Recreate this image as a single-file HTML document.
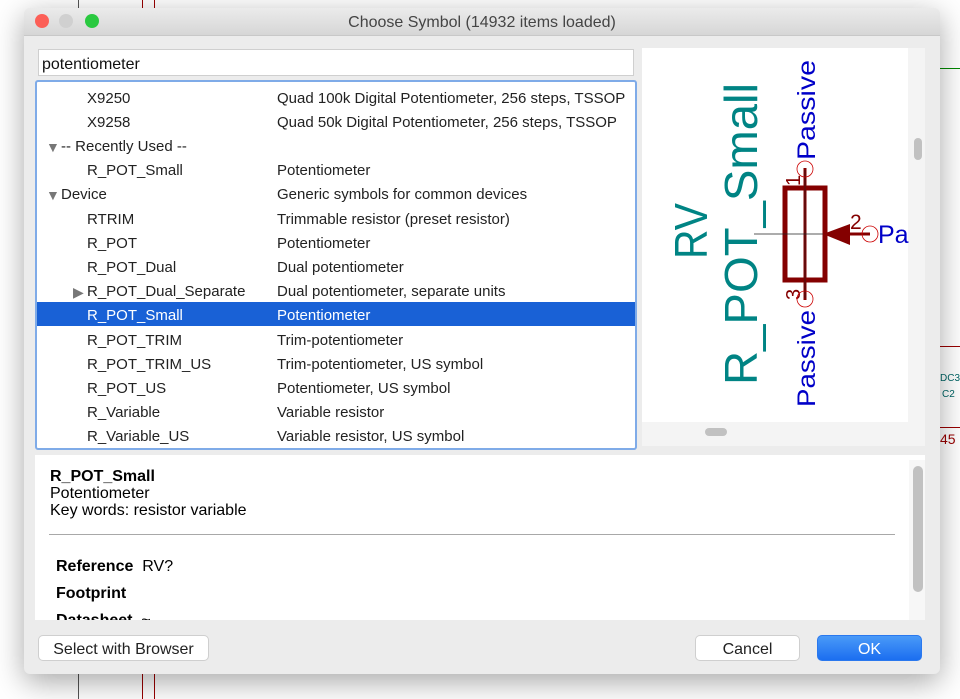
<!DOCTYPE html>
<html><head><meta charset="utf-8"><style>
*{margin:0;padding:0;box-sizing:border-box}
body{width:960px;height:699px;overflow:hidden;background:#fff;font-family:"Liberation Sans",sans-serif;position:relative}
.a{position:absolute}
.win{left:24px;top:8px;width:916px;height:666px;background:#ececec;border-radius:6px;box-shadow:0 8px 30px rgba(0,0,0,.35);overflow:hidden}
.row{position:absolute;left:0;width:598px;height:24px;font-size:15px;color:#222;line-height:28px}
.row span{position:absolute;white-space:nowrap}
.sel{background:#1961d6;color:#fff}
.btn{position:absolute;background:#fff;border:1px solid #cfcfcf;border-radius:5px;font-size:16px;color:#222;text-align:center;line-height:27px;height:26px}
.tri{color:#777;font-size:14px}
</style></head><body>
<div class="a" style="left:78px;top:0;width:1px;height:8px;background:#555"></div>
<div class="a" style="left:142px;top:0;width:1px;height:8px;background:#900"></div>
<div class="a" style="left:154px;top:0;width:1px;height:8px;background:#900"></div>
<div class="a" style="left:78px;top:674px;width:1px;height:25px;background:#555"></div>
<div class="a" style="left:142px;top:674px;width:1px;height:25px;background:#900"></div>
<div class="a" style="left:154px;top:674px;width:1px;height:25px;background:#900"></div>
<div class="a" style="left:940px;top:68px;width:20px;height:1px;background:#080"></div>
<div class="a" style="left:940px;top:346px;width:20px;height:1px;background:#900"></div>
<div class="a" style="left:940px;top:427px;width:20px;height:1px;background:#900"></div>
<div class="a" style="left:940px;top:373px;font-size:10px;color:#066">DC3</div>
<div class="a" style="left:942px;top:389px;font-size:10px;color:#066">C2</div>
<div class="a" style="left:940px;top:431px;font-size:14px;color:#900">45</div>
<div class="a win">
 <div class="a" style="left:0;top:0;width:916px;height:28px;background:linear-gradient(#ebebeb,#d6d6d6);border-bottom:1px solid #c8c8c8"></div>
 <div class="a" style="left:11px;top:6px;width:14px;height:14px;border-radius:50%;background:#fc5f57"></div>
 <div class="a" style="left:35px;top:6px;width:14px;height:14px;border-radius:50%;background:#d0d0d0"></div>
 <div class="a" style="left:61px;top:6px;width:14px;height:14px;border-radius:50%;background:#2ac940"></div>
 <div class="a" style="left:0;top:6px;width:916px;text-align:center;font-size:16px;color:#444">Choose Symbol (14932 items loaded)</div>
 <div class="a" style="left:14px;top:41px;width:596px;height:27px;background:#fff;border:1px solid #cfcfcf;font-size:16px;line-height:29px;padding-left:3px;color:#111">potentiometer</div>
 <div class="a" style="left:11px;top:72px;width:602px;height:370px;background:#fff;border:2px solid #7fabe8;border-radius:3px;overflow:hidden">
  <div class="row" style="top:3px"><span style="left:50px">X9250</span><span style="left:240px">Quad 100k Digital Potentiometer, 256 steps, TSSOP</span></div>
  <div class="row" style="top:27px"><span style="left:50px">X9258</span><span style="left:240px">Quad 50k Digital Potentiometer, 256 steps, TSSOP</span></div>
  <div class="row" style="top:51px"><span class="tri" style="left:9px">▼</span><span style="left:24px">-- Recently Used --</span></div>
  <div class="row" style="top:75px"><span style="left:50px">R_POT_Small</span><span style="left:240px">Potentiometer</span></div>
  <div class="row" style="top:99px"><span class="tri" style="left:9px">▼</span><span style="left:24px">Device</span><span style="left:240px">Generic symbols for common devices</span></div>
  <div class="row" style="top:124px"><span style="left:50px">RTRIM</span><span style="left:240px">Trimmable resistor (preset resistor)</span></div>
  <div class="row" style="top:148px"><span style="left:50px">R_POT</span><span style="left:240px">Potentiometer</span></div>
  <div class="row" style="top:172px"><span style="left:50px">R_POT_Dual</span><span style="left:240px">Dual potentiometer</span></div>
  <div class="row" style="top:196px"><span class="tri" style="left:36px">▶</span><span style="left:50px">R_POT_Dual_Separate</span><span style="left:240px">Dual potentiometer, separate units</span></div>
  <div class="row sel" style="top:220px"><span style="left:50px">R_POT_Small</span><span style="left:240px">Potentiometer</span></div>
  <div class="row" style="top:245px"><span style="left:50px">R_POT_TRIM</span><span style="left:240px">Trim-potentiometer</span></div>
  <div class="row" style="top:269px"><span style="left:50px">R_POT_TRIM_US</span><span style="left:240px">Trim-potentiometer, US symbol</span></div>
  <div class="row" style="top:293px"><span style="left:50px">R_POT_US</span><span style="left:240px">Potentiometer, US symbol</span></div>
  <div class="row" style="top:317px"><span style="left:50px">R_Variable</span><span style="left:240px">Variable resistor</span></div>
  <div class="row" style="top:341px"><span style="left:50px">R_Variable_US</span><span style="left:240px">Variable resistor, US symbol</span></div>
 </div>
 <div class="a" style="left:618px;top:40px;width:283px;height:398px;background:#f4f4f4"></div>
 <div class="a" style="left:618px;top:40px;width:266px;height:374px;background:#fff"></div>
 <div class="a" style="left:890px;top:130px;width:8px;height:22px;border-radius:4px;background:#c1c1c1"></div>
 <div class="a" style="left:681px;top:420px;width:22px;height:8px;border-radius:4px;background:#c1c1c1"></div>
 <svg class="a" style="left:0;top:0" width="916" height="450" viewBox="24 8 916 450">
  <g font-family="Liberation Sans,DejaVu Sans,sans-serif">
  <text transform="translate(707,231) rotate(-90)" text-anchor="middle" font-size="46" fill="#008484" textLength="56" lengthAdjust="spacingAndGlyphs">RV</text>
  <text transform="translate(757,234) rotate(-90)" text-anchor="middle" font-size="46" fill="#008484" textLength="302" lengthAdjust="spacingAndGlyphs">R_POT_Small</text>
  <text transform="translate(815,160) rotate(-90)" font-size="25" fill="#0000c8" textLength="100" lengthAdjust="spacingAndGlyphs">Passive</text>
  <text transform="translate(815,407) rotate(-90)" font-size="25" fill="#0000c8" textLength="97" lengthAdjust="spacingAndGlyphs">Passive</text>
  <text x="878" y="243" font-size="25" fill="#0000c8">Pa</text>
  <text transform="translate(800,186) rotate(-90)" font-size="20" fill="#840000">1</text>
  <text transform="translate(800,300) rotate(-90)" font-size="20" fill="#840000">3</text>
  <text x="850" y="229" font-size="21" fill="#840000">2</text>
  </g>
  <line x1="805" y1="168" x2="805" y2="300" stroke="#840000" stroke-width="3"/>
  <rect x="785" y="188" width="40" height="92" fill="none" stroke="#840000" stroke-width="5"/>
  <line x1="754" y1="234" x2="823" y2="234" stroke="#222" stroke-width="0.8"/>
  <line x1="805" y1="170" x2="805" y2="298" stroke="#222" stroke-width="0.6"/>
  <polygon points="823,234 850,224 850,245" fill="#840000"/>
  <line x1="848" y1="234" x2="870" y2="234" stroke="#840000" stroke-width="3"/>
  <circle cx="870" cy="234" r="8" fill="none" stroke="#c00" stroke-width="0.8"/>
  <circle cx="805" cy="169" r="8" fill="none" stroke="#c00" stroke-width="0.8"/>
  <circle cx="805" cy="299" r="8" fill="none" stroke="#c00" stroke-width="0.8"/>
 </svg>
 <div class="a" style="left:11px;top:447px;width:890px;height:165px;background:#fff"></div>
 <div class="a" style="left:885px;top:452px;width:16px;height:160px;background:#f7f7f7"></div>
 <div class="a" style="left:889px;top:458px;width:10px;height:126px;border-radius:5px;background:#c1c1c1"></div>
 <div class="a" style="left:26px;top:460px;font-size:16px;line-height:17px;color:#000"><b>R_POT_Small</b><br>Potentiometer<br>Key words: resistor variable</div>
 <div class="a" style="left:25px;top:526px;width:846px;height:1px;background:#a8a8a8"></div>
 <div class="a" style="left:32px;top:550px;font-size:16px;color:#000"><b>Reference</b>&nbsp; RV?</div>
 <div class="a" style="left:32px;top:577px;font-size:16px;color:#000"><b>Footprint</b></div>
 <div class="a" style="left:11px;top:598px;width:874px;height:14px;overflow:hidden"><div class="a" style="left:21px;top:6px;font-size:16px;color:#000"><b>Datasheet</b>&nbsp; ~</div></div>
 <div class="btn" style="left:14px;top:627px;width:171px">Select with Browser</div>
 <div class="btn" style="left:671px;top:627px;width:105px">Cancel</div>
 <div class="btn" style="left:793px;top:627px;width:105px;background:linear-gradient(#4a9af8,#1b6ef0);border-color:#2a78ee;color:#fff">OK</div>
</div>
</body></html>
